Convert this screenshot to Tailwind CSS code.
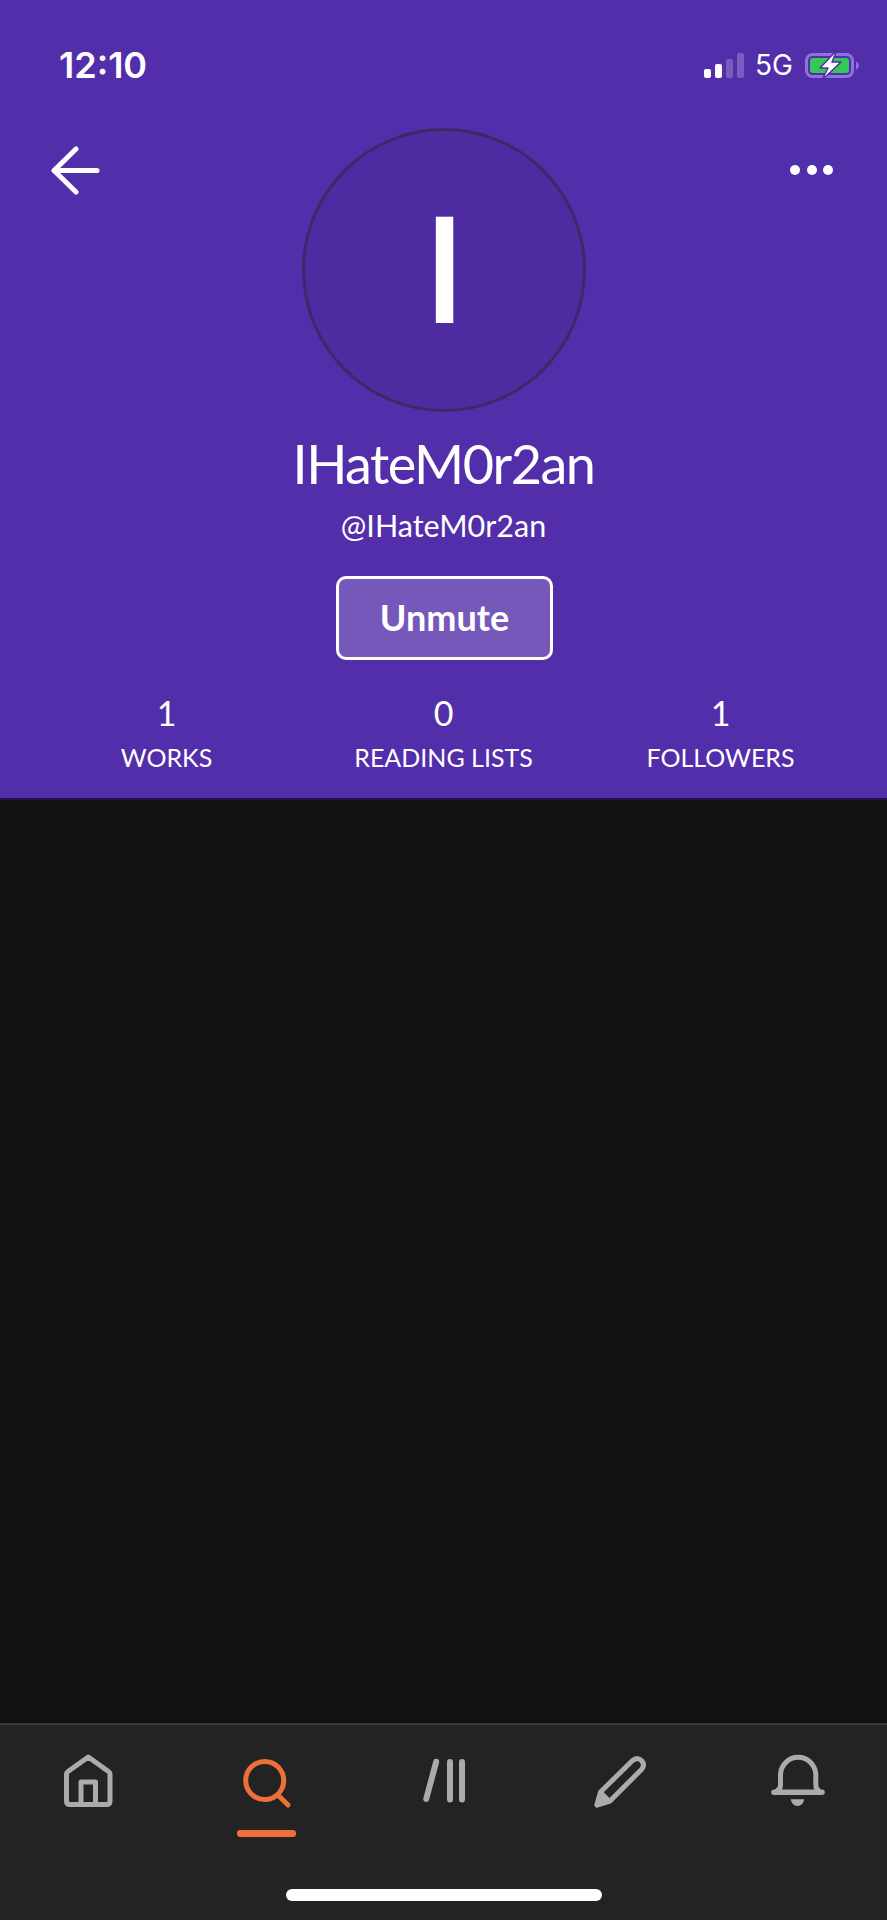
<!DOCTYPE html>
<html lang="en">
<head>
  <meta charset="UTF-8" />
  <meta name="viewport" content="width=device-width, initial-scale=1" />
  <title>IHateM0r2an</title>
  <script src="https://cdn.jsdelivr.net/npm/@tailwindcss/browser@4"></script>
</head>
<body class="bg-[#111111] text-white font-['Lato',sans-serif]">
  <div class="flex flex-col w-[887px] h-[1920px] overflow-hidden">

    <!-- profile header -->
    <header class="h-[800px] bg-[#532eaa] border-b-2 border-[#27144f] shrink-0">
      <!-- status bar -->
      <div class="flex items-center h-[50px] mt-[40px] pl-[59px] pr-[26px] font-['Inter',sans-serif]">
        <span class="text-[36px] font-semibold leading-none">12:10</span>
        <svg class="ml-auto" width="40" height="25" viewBox="0 0 40 25">
          <rect x="0" y="16" width="7" height="9" rx="2" fill="#fff" />
          <rect x="11" y="11" width="7" height="14" rx="2" fill="#fff" />
          <rect x="22" y="6" width="7" height="19" rx="2" fill="#7a5cc0" />
          <rect x="33" y="0" width="7" height="25" rx="2" fill="#7a5cc0" />
        </svg>
        <span class="ml-[11px] text-[28px] leading-none">5G</span>
        <svg class="ml-[12px]" width="56" height="32" viewBox="0 0 56 32">
          <rect x="1.500" y="5.500" width="46" height="22" rx="6" fill="none" stroke="#8f72dc" stroke-width="3" />
          <rect x="5" y="9" width="39" height="15" rx="3" fill="#34c759" />
          <path d="M51 12.500 Q54 14 54 16.500 Q54 19 51 20.500 Z" fill="#8f72dc" />
          <path d="M32 1 L15 19 H23 L17 31 L36 13 H27 Z" fill="#fff" stroke="#532eaa" stroke-width="1.500" stroke-linejoin="round" />
        </svg>
      </div>

      <!-- back, avatar, more -->
      <div class="grid grid-cols-[1fr_auto_1fr] mt-[38px] px-[54px]">
        <svg class="mt-[18px] -ml-[3px]" width="50" height="50" viewBox="0 0 50 50" fill="none" stroke="#fff" stroke-width="5" stroke-linecap="round" stroke-linejoin="round">
          <path d="M25 3 L3 24.500 L25 46 M3 24.500 H46" />
        </svg>
        <div class="flex items-center justify-center w-[284px] h-[284px] pb-[8px] pl-[2px] rounded-full border-[3px] border-[#3b2a66] bg-[#4e2ba0] font-['Open_Sans',sans-serif] text-[148px] font-semibold leading-none">I</div>
        <div class="flex justify-end gap-[6.5px] mt-[37px]">
          <span class="w-[10px] h-[10px] rounded-full bg-white"></span>
          <span class="w-[10px] h-[10px] rounded-full bg-white"></span>
          <span class="w-[10px] h-[10px] rounded-full bg-white"></span>
        </div>
      </div>

      <!-- name -->
      <div class="flex flex-col items-center">
        <h1 class="mt-[17px] text-[54px] leading-[70px] tracking-[-1.5px]">IHateM0r2an</h1>
        <p class="mt-[6px] text-[30.5px] leading-[40px]">@IHateM0r2an</p>
        <button class="flex items-center justify-center mt-[31px] ml-[2px] w-[217px] h-[84px] pb-[2px] rounded-[10px] border-[3px] border-white bg-[#7558b9] text-[36px] font-bold">Unmute</button>
      </div>

      <!-- stats -->
      <div class="grid grid-cols-3 mt-[31px] px-[28px] text-center">
        <div>
          <div class="text-[34px] leading-[44px]">1</div>
          <div class="mt-[3px] text-[25px] leading-[38px]">WORKS</div>
        </div>
        <div>
          <div class="text-[34px] leading-[44px]">0</div>
          <div class="mt-[3px] text-[25px] leading-[38px]">READING LISTS</div>
        </div>
        <div>
          <div class="text-[34px] leading-[44px]">1</div>
          <div class="mt-[3px] text-[25px] leading-[38px]">FOLLOWERS</div>
        </div>
      </div>
    </header>

    <main class="flex-1"></main>

    <!-- bottom nav -->
    <nav class="relative h-[197px] shrink-0 bg-[#232323] border-t-2 border-[#3a3a3a]">
      <div class="grid grid-cols-5 mt-[25px]">
        <div class="flex justify-center">
          <svg width="60" height="60" viewBox="0 0 60 60" fill="none" stroke="#ababab" stroke-width="5" stroke-linejoin="round">
            <path d="M29.300 7 L49.500 21.500 Q51 22.500 51 24.500 V51 Q51 54.500 47.500 54.500 H11 Q7.500 54.500 7.500 51 V24.500 Q7.500 22.500 9 21.500 Z M22 54 V32 H36.500 V54" />
          </svg>
        </div>
        <div class="flex flex-col items-center">
          <svg width="60" height="60" viewBox="0 0 60 60" fill="none" stroke="#ee6f39" stroke-width="5" stroke-linecap="round">
            <circle cx="28.700" cy="30.500" r="19" />
            <path d="M42 45 L52 55" />
          </svg>
          <span class="w-[59px] h-[7px] mt-[20px] rounded-[3px] bg-[#ee6f39]"></span>
        </div>
        <div class="flex justify-center">
          <svg width="60" height="60" viewBox="0 0 60 60" fill="none" stroke="#ababab" stroke-width="6" stroke-linecap="round">
            <path d="M23.200 11.700 L13.200 49 M37 12 V49.500 M49 12 V49.500" />
          </svg>
        </div>
        <div class="flex justify-center">
          <svg width="60" height="60" viewBox="0 0 60 60" fill="none" stroke="#ababab" stroke-width="5" stroke-linejoin="round">
            <path d="M6 55 L9.500 42 L41 11 Q46 6.500 50.500 10.500 Q54.500 15 50.500 19.500 L19 51 Z" />
            <path d="M6 55 L10 43 L18 51 Z" fill="#ababab" />
          </svg>
        </div>
        <div class="flex justify-center">
          <svg width="60" height="60" viewBox="0 0 60 60" fill="none" stroke="#ababab" stroke-width="5" stroke-linecap="round">
            <path d="M9 41 Q12.500 39 12.500 35 V24 A17.700 18 0 0 1 47.800 24 V35 Q47.800 39 51 41" />
            <path d="M6 42.300 H54" stroke-width="5.500" />
            <path d="M22.700 49.300 H36.300 Q35 56 29.500 56 Q24 56 22.700 49.300 Z" fill="#ababab" stroke="none" />
          </svg>
        </div>
      </div>
      <div class="absolute left-[286px] bottom-[19px] w-[316px] h-[12px] rounded-full bg-white"></div>
    </nav>
  </div>
</body>
</html>
